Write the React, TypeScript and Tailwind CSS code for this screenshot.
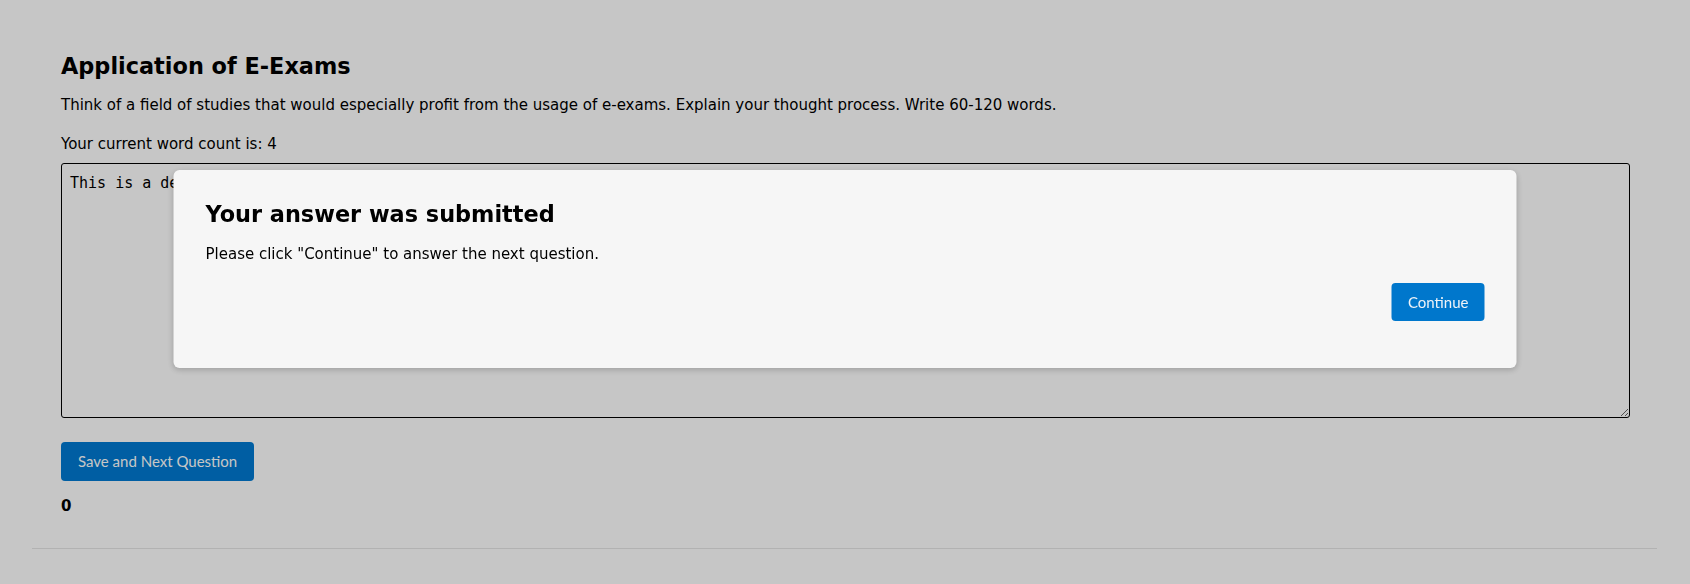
import React from "react";

export default function App() {
  return (
    <div className="relative min-h-[584px] w-full bg-white text-black" style={{ fontFamily: '"DejaVu Sans", sans-serif' }}>
      <div className="px-[32px] pt-[53px]">
        <div className="pl-[29px] pr-[28px]">
          <h1 className="text-[22.4px] font-bold leading-[26px] m-0">Application of E-Exams</h1>
          <p className="mt-[17px] text-[15px] leading-[18px]">
            Think of a field of studies that would especially profit from the usage of e-exams. Explain your thought process. Write 60-120 words.
          </p>
          <p className="mt-[21px] text-[15px] leading-[18px]">Your current word count is: 4</p>
          <textarea
            defaultValue="This is a demo"
            className="mt-[10px] block h-[255px] w-full rounded-[3px] border border-black bg-white px-[8px] pt-[10px] pb-[8px] text-[15px] leading-[18px] outline-none"
            style={{ fontFamily: '"DejaVu Sans Mono", monospace' }}
          />
          <button
            className="mt-[24px] block h-[39px] rounded-[4px] bg-[#007ad2] px-[17px] text-[15px] text-white"
            style={{ fontFamily: 'Lato, "Open Sans", sans-serif' }}
          >
            Save and Next Question
          </button>
          <div className="mt-[16px] text-[15px] font-bold leading-[18px]">0</div>
        </div>
        <hr className="mt-[33px] border-0 border-t border-[#e6e6e6] mr-[1px]" />
      </div>

      <div className="fixed inset-0 bg-[rgba(0,0,0,0.224)]" />

      <div className="fixed left-1/2 top-[170px] w-[1343px] -translate-x-1/2 rounded-[6px] bg-[#f6f6f6] px-[32px] pt-[31px] pb-[47px] shadow-[0_2px_6px_rgba(0,0,0,0.2)]">
        <h2 className="text-[22.4px] font-bold leading-[26px]">Your answer was submitted</h2>
        <p className="mt-[18px] text-[15px] leading-[18px]">Please click "Continue" to answer the next question.</p>
        <div className="mt-[20px] flex justify-end">
          <button
            className="h-[38px] rounded-[4px] bg-[#0077cc] px-[16px] text-[15px] text-[#eef3f8]"
            style={{ fontFamily: 'Lato, "Open Sans", sans-serif' }}
          >
            Continue
          </button>
        </div>
      </div>
    </div>
  );
}
